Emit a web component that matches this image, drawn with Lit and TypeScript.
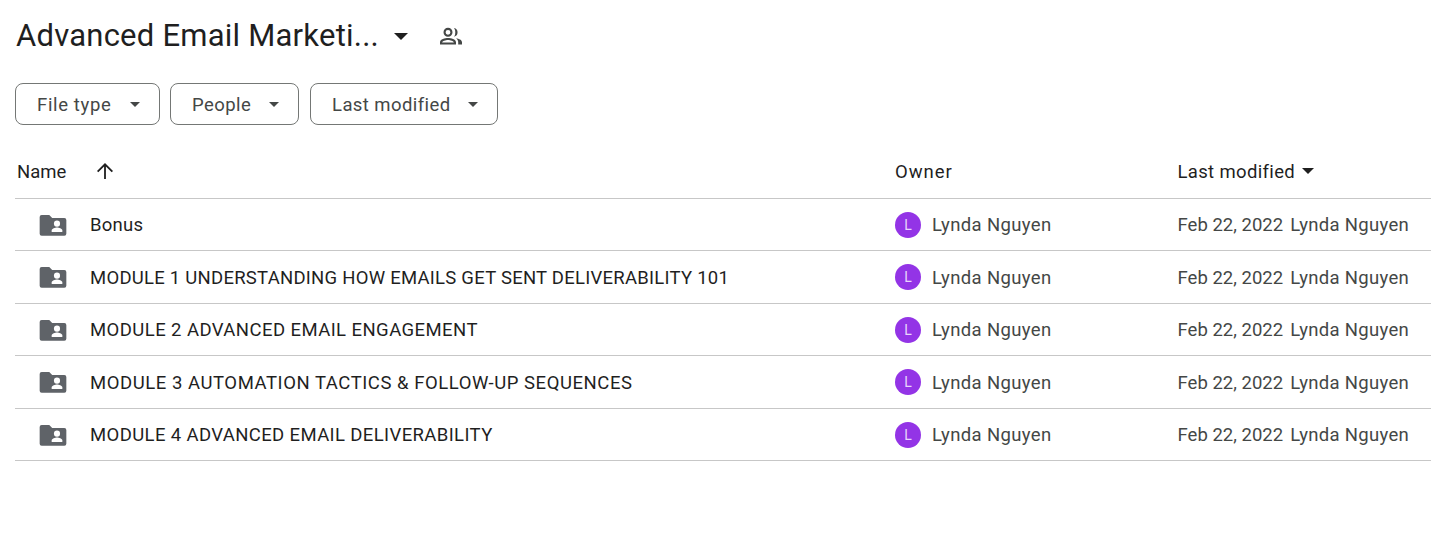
import { LitElement, html, css } from "lit";
import { customElement } from "lit/decorators.js";
import { styleMap } from "lit/directives/style-map.js";

const rows = [
  { name: "Bonus", ls: 0.25 },
  { name: "MODULE 1 UNDERSTANDING HOW EMAILS GET SENT DELIVERABILITY 101", ls: 0.25 },
  { name: "MODULE 2 ADVANCED EMAIL ENGAGEMENT", ls: 0.43 },
  { name: "MODULE 3 AUTOMATION TACTICS & FOLLOW-UP SEQUENCES", ls: 0.55 },
  { name: "MODULE 4 ADVANCED EMAIL DELIVERABILITY", ls: 0.38 },
];

const caret = (cls: string) => html`<svg class=${cls} viewBox="0 0 10 5"><path d="M0 0l5 5 5-5z"/></svg>`;

@customElement("app-root")
export class AppRoot extends LitElement {
  static styles = css`
    :host { display: block; width: 1431px; height: 533px; background: #fff; font-family: Roboto, "Noto Sans", sans-serif; color: #1f1f1f; overflow: hidden; }
    .head { display: flex; align-items: center; height: 36px; margin-top: 18px; padding-left: 16px; }
    .title { font-size: 31px; line-height: 36px; letter-spacing: 0.23px; white-space: nowrap; width: 362px; }
    .tcaret { width: 14px; height: 7px; fill: #1f1f1f; margin-left: 16px; }
    .people { width: 24px; height: 24px; fill: #444746; margin-left: 31px; }
    .filters { display: flex; margin: 29px 0 0 15px; }
    .chip { box-sizing: border-box; height: 42px; border: 1px solid #747775; border-radius: 8px; display: flex; align-items: center; justify-content: space-between; padding: 0 19px 0 21px; font-size: 18.5px; letter-spacing: 0.42px; color: #444746; }
    .chip span, .t { padding-top: 2px; }
    .c1 { width: 145px; margin-right: 10px; letter-spacing: 0.65px; } .c2 { width: 129px; margin-right: 11px; } .c3 { width: 188px; }
    .ccaret { width: 10px; height: 5px; fill: #444746; }
    .thead, .row { display: grid; grid-template-columns: 880px 282.5px 1fr; margin-left: 15px; border-bottom: 1px solid #c7c7c7; box-sizing: border-box; align-items: center; }
    .thead { height: 73.6px; padding-top: 19px; font-size: 18.5px; letter-spacing: 0.35px; color: #1f1f1f; }
    .row { height: 52.5px; padding-top: 0.5px; font-size: 18.5px; }
    .row .t { padding-top: 1px; }
    .n { display: flex; align-items: center; }
    .nh { padding-left: 2px; letter-spacing: 0; }
    .own { letter-spacing: 0.95px; }
    .arrow { width: 24px; height: 24px; fill: #1f1f1f; margin-left: 27px; }
    .lm { display: flex; align-items: center; gap: 7px; }
    .hcaret { width: 12px; height: 6px; fill: #1f1f1f; }
    .folder { width: 32px; height: 32px; fill: #5f6368; margin-left: 22px; margin-right: 21px; }
    .o { display: flex; align-items: center; gap: 11px; color: #444746; letter-spacing: 0.36px; }
    .av { width: 26px; height: 26px; border-radius: 50%; background: #9334e6; color: #e9d5fb; font-size: 14px; letter-spacing: 0; display: flex; align-items: center; justify-content: center; }
    .d { display: flex; gap: 7px; color: #444746; white-space: nowrap; letter-spacing: 0.02px; }
    .d .u { letter-spacing: 0.3px; }
  `;

  render() {
    return html`
      <div class="head">
        <div class="title">Advanced Email Marketi...</div>
        ${caret("tcaret")}
        <svg class="people" viewBox="0 0 24 24"><path fill-rule="evenodd" d="M9 12.800a4.500 4.500 0 1 0 0-9 4.500 4.500 0 0 0 0 9zm0-6.900a2.400 2.400 0 1 1 0 4.800 2.400 2.400 0 0 1 0-4.800zM9 14c-2.900 0-8 1.300-8 4.200V20.500h16v-2.300C17 15.300 11.900 14 9 14zm-5.800 4.400c.3-1.200 3.300-2.300 5.800-2.300s5.500 1.100 5.800 2.300H3.200zM15 3.900a4.500 4.500 0 0 1 0 8.800 6.500 6.500 0 0 0 1.300-4.400A6.500 6.500 0 0 0 15 3.900zM17 14.200c3 .5 6 1.700 6 4V20.500h-3.800v-2.300c0-1.600-.9-2.900-2.200-4z"/></svg>
      </div>
      <div class="filters">
        <div class="chip c1"><span>File type</span> ${caret("ccaret")}</div>
        <div class="chip c2"><span>People</span> ${caret("ccaret")}</div>
        <div class="chip c3"><span>Last modified</span> ${caret("ccaret")}</div>
      </div>
      <div class="thead">
        <div class="n nh"><span class="t">Name</span>
          <svg class="arrow" viewBox="0 0 24 24"><path d="M11.100 20V7.400L5.300 13.200 4 12l8-8 8 8-1.300 1.200-5.800-5.800V20z"/></svg>
        </div>
        <div class="own"><div class="t">Owner</div></div>
        <div class="lm"><span class="t">Last modified</span> ${caret("hcaret")}</div>
      </div>
      ${rows.map((r) => html`
        <div class="row">
          <div class="n">
            <svg class="folder" viewBox="0 0 24 24"><path d="M3.500 4.500h5.700l2.200 2.300h9.100a1.500 1.500 0 0 1 1.500 1.500v10.200a1.500 1.500 0 0 1-1.500 1.500h-17A1.500 1.500 0 0 1 2 18.500V6a1.500 1.500 0 0 1 1.500-1.500z"/><circle cx="15" cy="11" r="2.300" fill="#fff"/><path d="M11 17.200v-1.100c0-1.500 2.700-2.200 4-2.200s4 .7 4 2.200v1.100z" fill="#fff"/></svg>
            <span class="t" style=${styleMap({ letterSpacing: `${r.ls}px` })}>${r.name}</span>
          </div>
          <div class="o"><span class="av">L</span><span class="t">Lynda Nguyen</span></div>
          <div class="d"><span class="t">Feb 22, 2022</span><span class="t u">Lynda Nguyen</span></div>
        </div>`)}
    `;
  }
}
